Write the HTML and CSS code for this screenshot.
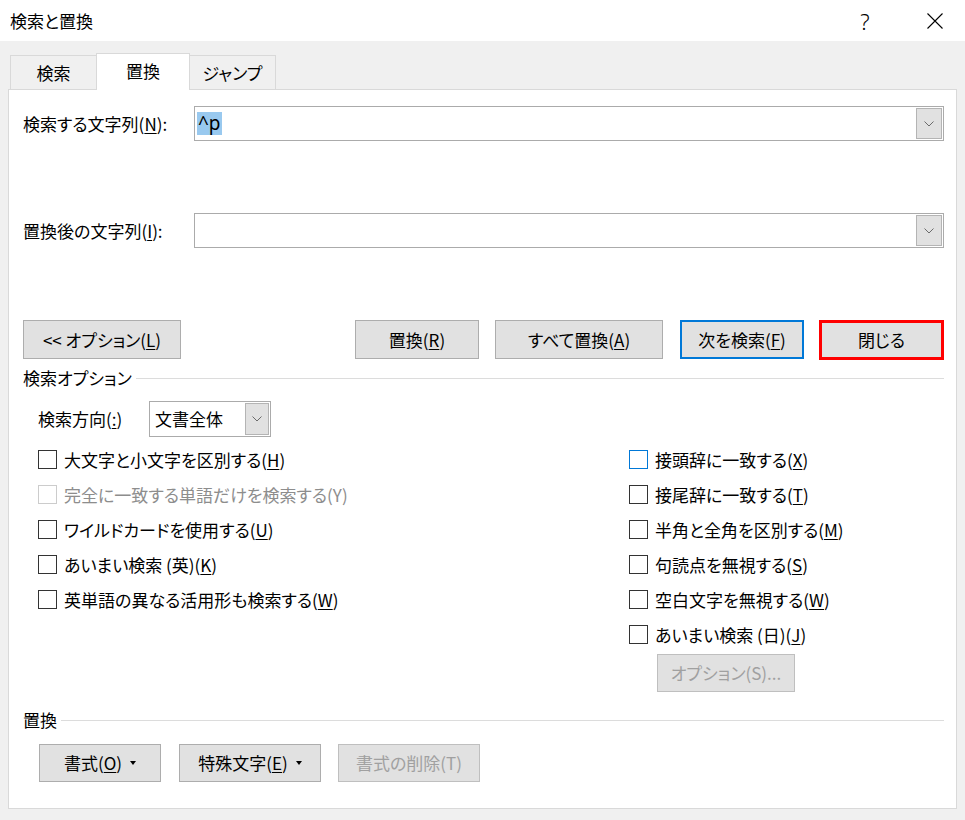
FILE: index.html
```
<!DOCTYPE html>
<html lang="ja">
<head>
<meta charset="utf-8">
<title>検索と置換</title>
<link rel="stylesheet" href="styles.css">
</head>
<body>
<div class="titlebar">
  <span class="title">検索と置換</span>
  <span class="help">?</span>
  <span class="close"><svg width="16" height="16" viewBox="0 0 16 16"><path d="M0.5 0.5 L15.5 15.5 M15.5 0.5 L0.5 15.5" stroke="#000" stroke-width="1.1" fill="none"/></svg></span>
</div>
<div class="tabs">
  <div class="tab tab-first">検索</div>
  <div class="tab tab-active">置換</div>
  <div class="tab tab-last">ジャンプ</div>
</div>
<div class="panel">
  <div class="field">
    <span class="label">検索する文字列(<u>N</u>):</span>
    <div class="combo combo-wide">
      <span class="combo-text"><span class="sel">^p</span></span>
      <span class="drop"><svg width="10" height="6" viewBox="0 0 10 6"><path d="M0.5 0.5 L5 5 L9.5 0.5" stroke="#6b6b6b" stroke-width="1" fill="none"/></svg></span>
    </div>
  </div>
  <div class="field field-second">
    <span class="label">置換後の文字列(<u>I</u>):</span>
    <div class="combo combo-wide">
      <span class="combo-text"></span>
      <span class="drop"><svg width="10" height="6" viewBox="0 0 10 6"><path d="M0.5 0.5 L5 5 L9.5 0.5" stroke="#6b6b6b" stroke-width="1" fill="none"/></svg></span>
    </div>
  </div>
  <div class="btn-row">
    <div class="btn btn-options">&lt;&lt; オプション(<u>L</u>)</div>
    <div class="btn btn-replace">置換(<u>R</u>)</div>
    <div class="btn btn-all">すべて置換(<u>A</u>)</div>
    <div class="btn btn-next">次を検索(<u>F</u>)</div>
    <div class="btn btn-close">閉じる</div>
  </div>
  <div class="group">
    <span class="group-label">検索オプション</span>
    <span class="group-line"></span>
  </div>
  <div class="direction">
    <span class="dir-label">検索方向(<u>:</u>)</span>
    <div class="combo combo-dir">
      <span class="combo-text dir-text">文書全体</span>
      <span class="drop drop-dir"><svg width="10" height="6" viewBox="0 0 10 6"><path d="M0.5 0.5 L5 5 L9.5 0.5" stroke="#6b6b6b" stroke-width="1" fill="none"/></svg></span>
    </div>
  </div>
  <div class="options">
    <div class="col col-left">
      <div class="check"><span class="box"></span><span>大文字と小文字を区別する(<u>H</u>)</span></div>
      <div class="check disabled"><span class="box"></span><span>完全に一致する単語だけを検索する(Y)</span></div>
      <div class="check"><span class="box"></span><span>ワイルドカードを使用する(<u>U</u>)</span></div>
      <div class="check"><span class="box"></span><span>あいまい検索 (英)(<u>K</u>)</span></div>
      <div class="check"><span class="box"></span><span>英単語の異なる活用形も検索する(<u>W</u>)</span></div>
    </div>
    <div class="col col-right">
      <div class="check focus"><span class="box"></span><span>接頭辞に一致する(<u>X</u>)</span></div>
      <div class="check"><span class="box"></span><span>接尾辞に一致する(<u>T</u>)</span></div>
      <div class="check"><span class="box"></span><span>半角と全角を区別する(<u>M</u>)</span></div>
      <div class="check"><span class="box"></span><span>句読点を無視する(<u>S</u>)</span></div>
      <div class="check"><span class="box"></span><span>空白文字を無視する(<u>W</u>)</span></div>
      <div class="check"><span class="box"></span><span>あいまい検索 (日)(<u>J</u>)</span></div>
      <div class="btn btn-disabled btn-sub">オプション(S)...</div>
    </div>
  </div>
  <div class="group group-replace">
    <span class="group-label">置換</span>
    <span class="group-line"></span>
  </div>
  <div class="bottom-row">
    <div class="btn btn-format">書式(<u>O</u>)<span class="tri"></span></div>
    <div class="btn btn-special">特殊文字(<u>E</u>)<span class="tri"></span></div>
    <div class="btn btn-disabled btn-clear">書式の削除(T)</div>
  </div>
</div>
</body>
</html>
```
FILE: styles.css
```
* { box-sizing: border-box; }
html, body { margin: 0; padding: 0; }
body {
  width: 965px;
  height: 820px;
  overflow: hidden;
  background: #f0f0f0;
  font-family: "Noto Sans CJK JP", "Noto Sans", sans-serif;
  font-size: 17px;
  line-height: 20px;
  color: #000;
  font-feature-settings: "palt";
}
u { text-decoration-thickness: 1px; text-underline-offset: 2px; }

.titlebar {
  height: 41px;
  background: #fff;
  display: flex;
  align-items: center;
  padding-left: 10px;
}
.title { flex: 1; font-size: 17px; }
.help {
  width: 20px;
  margin-right: 30px;
  text-align: center;
  font-family: "Noto Sans", sans-serif;
  font-weight: 300;
  font-size: 22px;
}
.close { width: 60px; display: flex; justify-content: center; align-items: center; }

.tabs {
  height: 48px;
  padding: 12px 0 0 10px;
  display: flex;
  align-items: flex-end;
}
.tab {
  height: 34px;
  border: 1px solid #d9d9d9;
  border-bottom: none;
  background: #f0f0f0;
  display: flex;
  align-items: center;
  justify-content: center;
}
.tab-first { width: 86px; border-right: none; }
.tab-active {
  width: 94px;
  height: 37px;
  margin-bottom: -1px;
  background: #fff;
  position: relative;
  z-index: 1;
  padding-bottom: 2px;
}
.tab-last { width: 86px; border-left: none; }

.panel {
  margin: 0 8px;
  height: 720px;
  background: #fff;
  border: 1px solid #d9d9d9;
  padding: 16px 12px 0 14px;
}

.field {
  display: grid;
  grid-template-columns: 171px 1fr;
  align-items: center;
  height: 35px;
}
.field-second { margin-top: 72px; }

.combo {
  height: 35px;
  border: 1px solid #ababab;
  display: flex;
  align-items: stretch;
  padding: 1px;
  background: #fff;
}
.combo-text {
  flex: 1;
  display: flex;
  align-items: center;
  padding-left: 1px;
}
.sel {
  background: #99c9ef;
  font-size: 19px;
  line-height: 23px;
  padding: 0 1px 0 1px;
  font-family: "Noto Sans", sans-serif;
}
.drop {
  width: 26px;
  background: #e1e1e1;
  border: 1px solid #b4b4b4;
  display: flex;
  align-items: center;
  justify-content: center;
}

.btn-row {
  margin-top: 72px;
  height: 40px;
  display: flex;
  align-items: flex-start;
}
.btn {
  height: 39px;
  border: 1px solid #adadad;
  background: #e1e1e1;
  display: flex;
  align-items: center;
  justify-content: center;
  white-space: nowrap;
}
.btn-options { width: 158px; }
.btn-replace { width: 124px; margin-left: auto; }
.btn-all { width: 168px; margin-left: 16px; }
.btn-next { width: 124px; margin-left: 17px; border: 2px solid #0078d7; }
.btn-close { width: 125px; height: 40px; margin-left: 15px; border: 3px solid #ff0000; }

.group {
  margin-top: 8px;
  height: 20px;
  display: flex;
  align-items: center;
}
.group-line {
  flex: 1;
  height: 1px;
  background: #dcdcdc;
  margin-left: 4px;
}

.direction {
  margin-top: 13px;
  padding-left: 15px;
  display: flex;
  align-items: center;
  height: 36px;
}
.dir-label { width: 111px; }
.combo-dir { width: 122px; height: 36px; }
.dir-text { padding-left: 4px; }
.drop-dir { width: 24px; }

.options {
  margin-top: 5px;
  padding-left: 15px;
  display: grid;
  grid-template-columns: 591px 1fr;
}
.check {
  height: 35px;
  display: flex;
  align-items: center;
  gap: 7px;
  white-space: nowrap;
}
.box {
  width: 19px;
  height: 19px;
  border: 1px solid #333;
  background: #fff;
  flex: none;
}
.check.disabled { color: #8d8d8d; }
.check.disabled .box { border-color: #cccccc; }
.check.focus .box { border-color: #0078d7; }

.btn-disabled {
  color: #a0a0a0;
  border-color: #bfbfbf;
  background: #e1e1e1;
}
.btn-sub {
  width: 138px;
  height: 38px;
  margin: 2px 0 0 28px;
}

.group-replace { margin-top: 18px; }

.bottom-row {
  margin-top: 14px;
  padding-left: 16px;
  display: flex;
}
.bottom-row .btn { height: 38px; }
.btn-format { width: 122px; }
.btn-special { width: 142px; margin-left: 18px; }
.btn-clear { width: 142px; margin-left: 17px; }
.tri {
  width: 0;
  height: 0;
  border-left: 3px solid transparent;
  border-right: 3px solid transparent;
  border-top: 4px solid #000;
  margin-left: 8px;
}
```
